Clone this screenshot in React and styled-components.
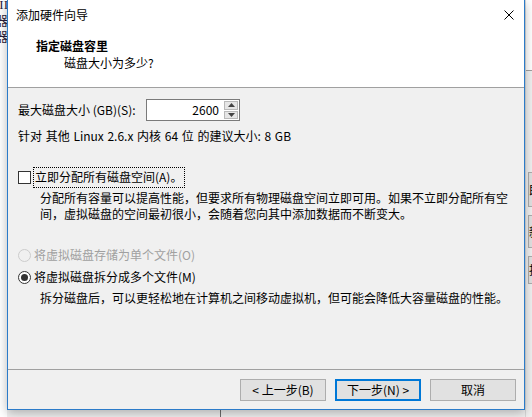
import React from "react";
import styled, { createGlobalStyle } from "styled-components";

const Global = createGlobalStyle`
  html, body {
    margin: 0;
    padding: 0;
  }
  body {
    font-family: "Noto Sans CJK SC", "Noto Sans", sans-serif;
    font-size: 12px;
    color: #000;
  }
`;

export default function App() {
    return (
        <Desktop>
            <Global/>
            <LeftWindow>
                <Glyph top={-3}>II</Glyph>
                <Glyph top={13}>器</Glyph>
                <Glyph top={29}>器</Glyph>
            </LeftWindow>
            <RightWindow>
                <RightPane/>
                <SideButton top={172} height={35}>即</SideButton>
                <SideButton top={215} height={33}>新</SideButton>
                <SideButton top={256} height={28}>拆</SideButton>
            </RightWindow>
            <BackLine/>

            <Dialog>
                <TitleBar>
                    <span>添加硬件向导</span>
                    <CloseIcon viewBox="0 0 10 10">
                        <path d="M0.5 0.5 L9.5 9.5 M9.5 0.5 L0.5 9.5" stroke="#000" strokeWidth="1" fill="none"/>
                    </CloseIcon>
                </TitleBar>
                <Header>
                    <HeaderTitle>指定磁盘容里</HeaderTitle>
                    <HeaderSub>磁盘大小为多少?</HeaderSub>
                </Header>

                <Body>
                    <SizeRow>
                        <FieldLabel>最大磁盘大小 (GB)(S):</FieldLabel>
                        <SpinBox>
                            <SpinValue>2600</SpinValue>
                            <Spinner>
                                <SpinButton>
                                    <svg width="7" height="4" viewBox="0 0 7 4"><path d="M0 4 L3.5 0 L7 4 Z" fill="#444"/></svg>
                                </SpinButton>
                                <SpinButton>
                                    <svg width="7" height="4" viewBox="0 0 7 4"><path d="M0 0 L3.5 4 L7 0 Z" fill="#444"/></svg>
                                </SpinButton>
                            </Spinner>
                        </SpinBox>
                    </SizeRow>
                    <Line gap={7}>针对 其他 Linux 2.6.x 内核 64 位 的建议大小: 8 GB</Line>

                    <OptionRow gap={23}>
                        <CheckBox/>
                        <FocusLabel>立即分配所有磁盘空间(A)。</FocusLabel>
                    </OptionRow>
                    <Description gap={2}>
                        分配所有容量可以提高性能，但要求所有物理磁盘空间立即可用。如果不立即分配所有空<br/>
                        间，虚拟磁盘的空间最初很小，会随着您向其中添加数据而不断变大。
                    </Description>

                    <OptionRow gap={25} disabled>
                        <Radio disabled/>
                        <OptionText>将虚拟磁盘存储为单个文件(O)</OptionText>
                    </OptionRow>
                    <OptionRow gap={6}>
                        <Radio checked/>
                        <OptionText>将虚拟磁盘拆分成多个文件(M)</OptionText>
                    </OptionRow>
                    <Description gap={5}>
                        拆分磁盘后，可以更轻松地在计算机之间移动虚拟机，但可能会降低大容量磁盘的性能。
                    </Description>
                </Body>

                <Footer>
                    <Button>&lt; 上一步(B)</Button>
                    <Button primary>下一步(N) &gt;</Button>
                    <Button>取消</Button>
                </Footer>
            </Dialog>
        </Desktop>
    )
};

const Desktop = styled.div`
    position: relative;
    width: 532px;
    height: 417px;
    overflow: hidden;
    background: #f0f0f0;
`;

const LeftWindow = styled.div`
    position: absolute;
    left: 0;
    top: 0;
    width: 7px;
    height: 417px;
    overflow: hidden;
    background: #fff;
`;

const Glyph = styled.div`
    position: absolute;
    right: -1px;
    top: ${props => props.top}px;
    font-family: "Liberation Serif", "Noto Sans CJK SC", serif;
    font-size: 13px;
    line-height: 16px;
    color: #2a1d3a;
    white-space: nowrap;
`;

const RightWindow = styled.div`
    position: absolute;
    left: 525px;
    top: 0;
    width: 7px;
    height: 417px;
    overflow: hidden;
    background: #f0f0f0;
    border-left: 1px solid #d8d8d8;
`;

const RightPane = styled.div`
    height: 70px;
    background: #fff;
    border-bottom: 1px solid #a0a0a0;
`;

const SideButton = styled.div`
    position: absolute;
    left: 2px;
    top: ${props => props.top}px;
    width: 30px;
    height: ${props => props.height}px;
    box-sizing: border-box;
    border: 1px solid #adadad;
    background: #e1e1e1;
    display: flex;
    align-items: center;
    font-size: 12px;
    line-height: 16px;
`;

const BackLine = styled.div`
    position: absolute;
    left: 220px;
    top: 405px;
    width: 1px;
    height: 12px;
    background: #6d6d6d;
`;

const Dialog = styled.div`
    position: absolute;
    left: 7px;
    top: 0;
    width: 518px;
    height: 410px;
    box-sizing: border-box;
    border: 1px solid #2b7bc9;
    border-top: none;
    background: #f0f0f0;
    display: flex;
    flex-direction: column;
    box-shadow: 0 3px 10px rgba(0, 0, 0, 0.28);
`;

const TitleBar = styled.div`
    height: 30px;
    background: #fff;
    display: flex;
    align-items: center;
    justify-content: space-between;
    padding: 0 10px 0 8px;
    line-height: 16px;
`;

const CloseIcon = styled.svg`
    width: 10px;
    height: 10px;
    margin-top: -1px;
`;

const Header = styled.div`
    height: 57px;
    background: #fff;
    border-bottom: 1px solid #a0a0a0;
    padding-left: 28px;
    line-height: 16px;
`;

const HeaderTitle = styled.div`
    font-weight: bold;
    margin-top: 8px;
`;

const HeaderSub = styled.div`
    margin-top: 1px;
    padding-left: 28px;
`;

const Body = styled.div`
    flex: 1;
    padding: 11px 10px 0;
    line-height: 16px;
`;

const SizeRow = styled.div`
    display: flex;
    align-items: center;
    height: 22px;
`;

const FieldLabel = styled.span`
    width: 128px;
`;

const SpinBox = styled.div`
    width: 94px;
    height: 22px;
    box-sizing: border-box;
    border: 1px solid #7a7a7a;
    background: #fff;
    display: flex;
    align-items: stretch;
`;

const SpinValue = styled.div`
    flex: 1;
    padding-right: 5px;
    display: flex;
    align-items: center;
    justify-content: flex-end;
`;

const Spinner = styled.div`
    width: 14px;
    display: flex;
    flex-direction: column;
    gap: 1px;
    padding: 1px 1px 1px 0;
`;

const SpinButton = styled.div`
    flex: 1;
    background: #e6e6e6;
    border: 1px solid #b9b9b9;
    display: flex;
    align-items: center;
    justify-content: center;
`;

const Line = styled.div`
    margin-top: ${props => props.gap}px;
    word-spacing: 1px;
`;

const OptionRow = styled.div`
    margin-top: ${props => props.gap}px;
    display: flex;
    align-items: center;
    color: ${props => props.disabled ? '#a0a0a0' : '#000'};
`;

const CheckBox = styled.span`
    width: 13px;
    height: 13px;
    box-sizing: border-box;
    border: 1px solid #333;
    background: #fff;
`;

const FocusLabel = styled.span`
    margin-left: 2px;
    padding: 1px 2px 2px 1px;
    border: 1px dotted #000;
`;

const Radio = styled.span`
    position: relative;
    width: 13px;
    height: 13px;
    box-sizing: border-box;
    border-radius: 50%;
    border: 1px solid ${props => props.disabled ? '#cccccc' : '#333'};
    background: ${props => props.disabled ? '#f0f0f0' : '#fff'};

    &::after {
        content: '';
        display: ${props => props.checked ? 'block' : 'none'};
        position: absolute;
        left: 2px;
        top: 2px;
        width: 7px;
        height: 7px;
        border-radius: 50%;
        background: #333;
    }
`;

const OptionText = styled.span`
    margin-left: 3px;
`;

const Description = styled.div`
    margin-top: ${props => props.gap}px;
    padding-left: 22px;
`;

const Footer = styled.div`
    height: 40px;
    box-sizing: border-box;
    border-top: 1px solid #a0a0a0;
    display: flex;
    justify-content: flex-end;
    align-items: flex-start;
    gap: 9px;
    padding: 9px 8px 0 0;
`;

const Button = styled.button`
    width: 86px;
    height: 22px;
    box-sizing: border-box;
    margin: 0;
    padding: 0;
    font-family: "Noto Sans CJK SC", "Noto Sans", sans-serif;
    font-size: 12px;
    line-height: 16px;
    color: #000;
    background: #e1e1e1;
    border: 1px solid ${props => props.primary ? '#0078d7' : '#adadad'};
    box-shadow: ${props => props.primary ? 'inset 0 0 0 1px #0078d7' : 'none'};
`;
